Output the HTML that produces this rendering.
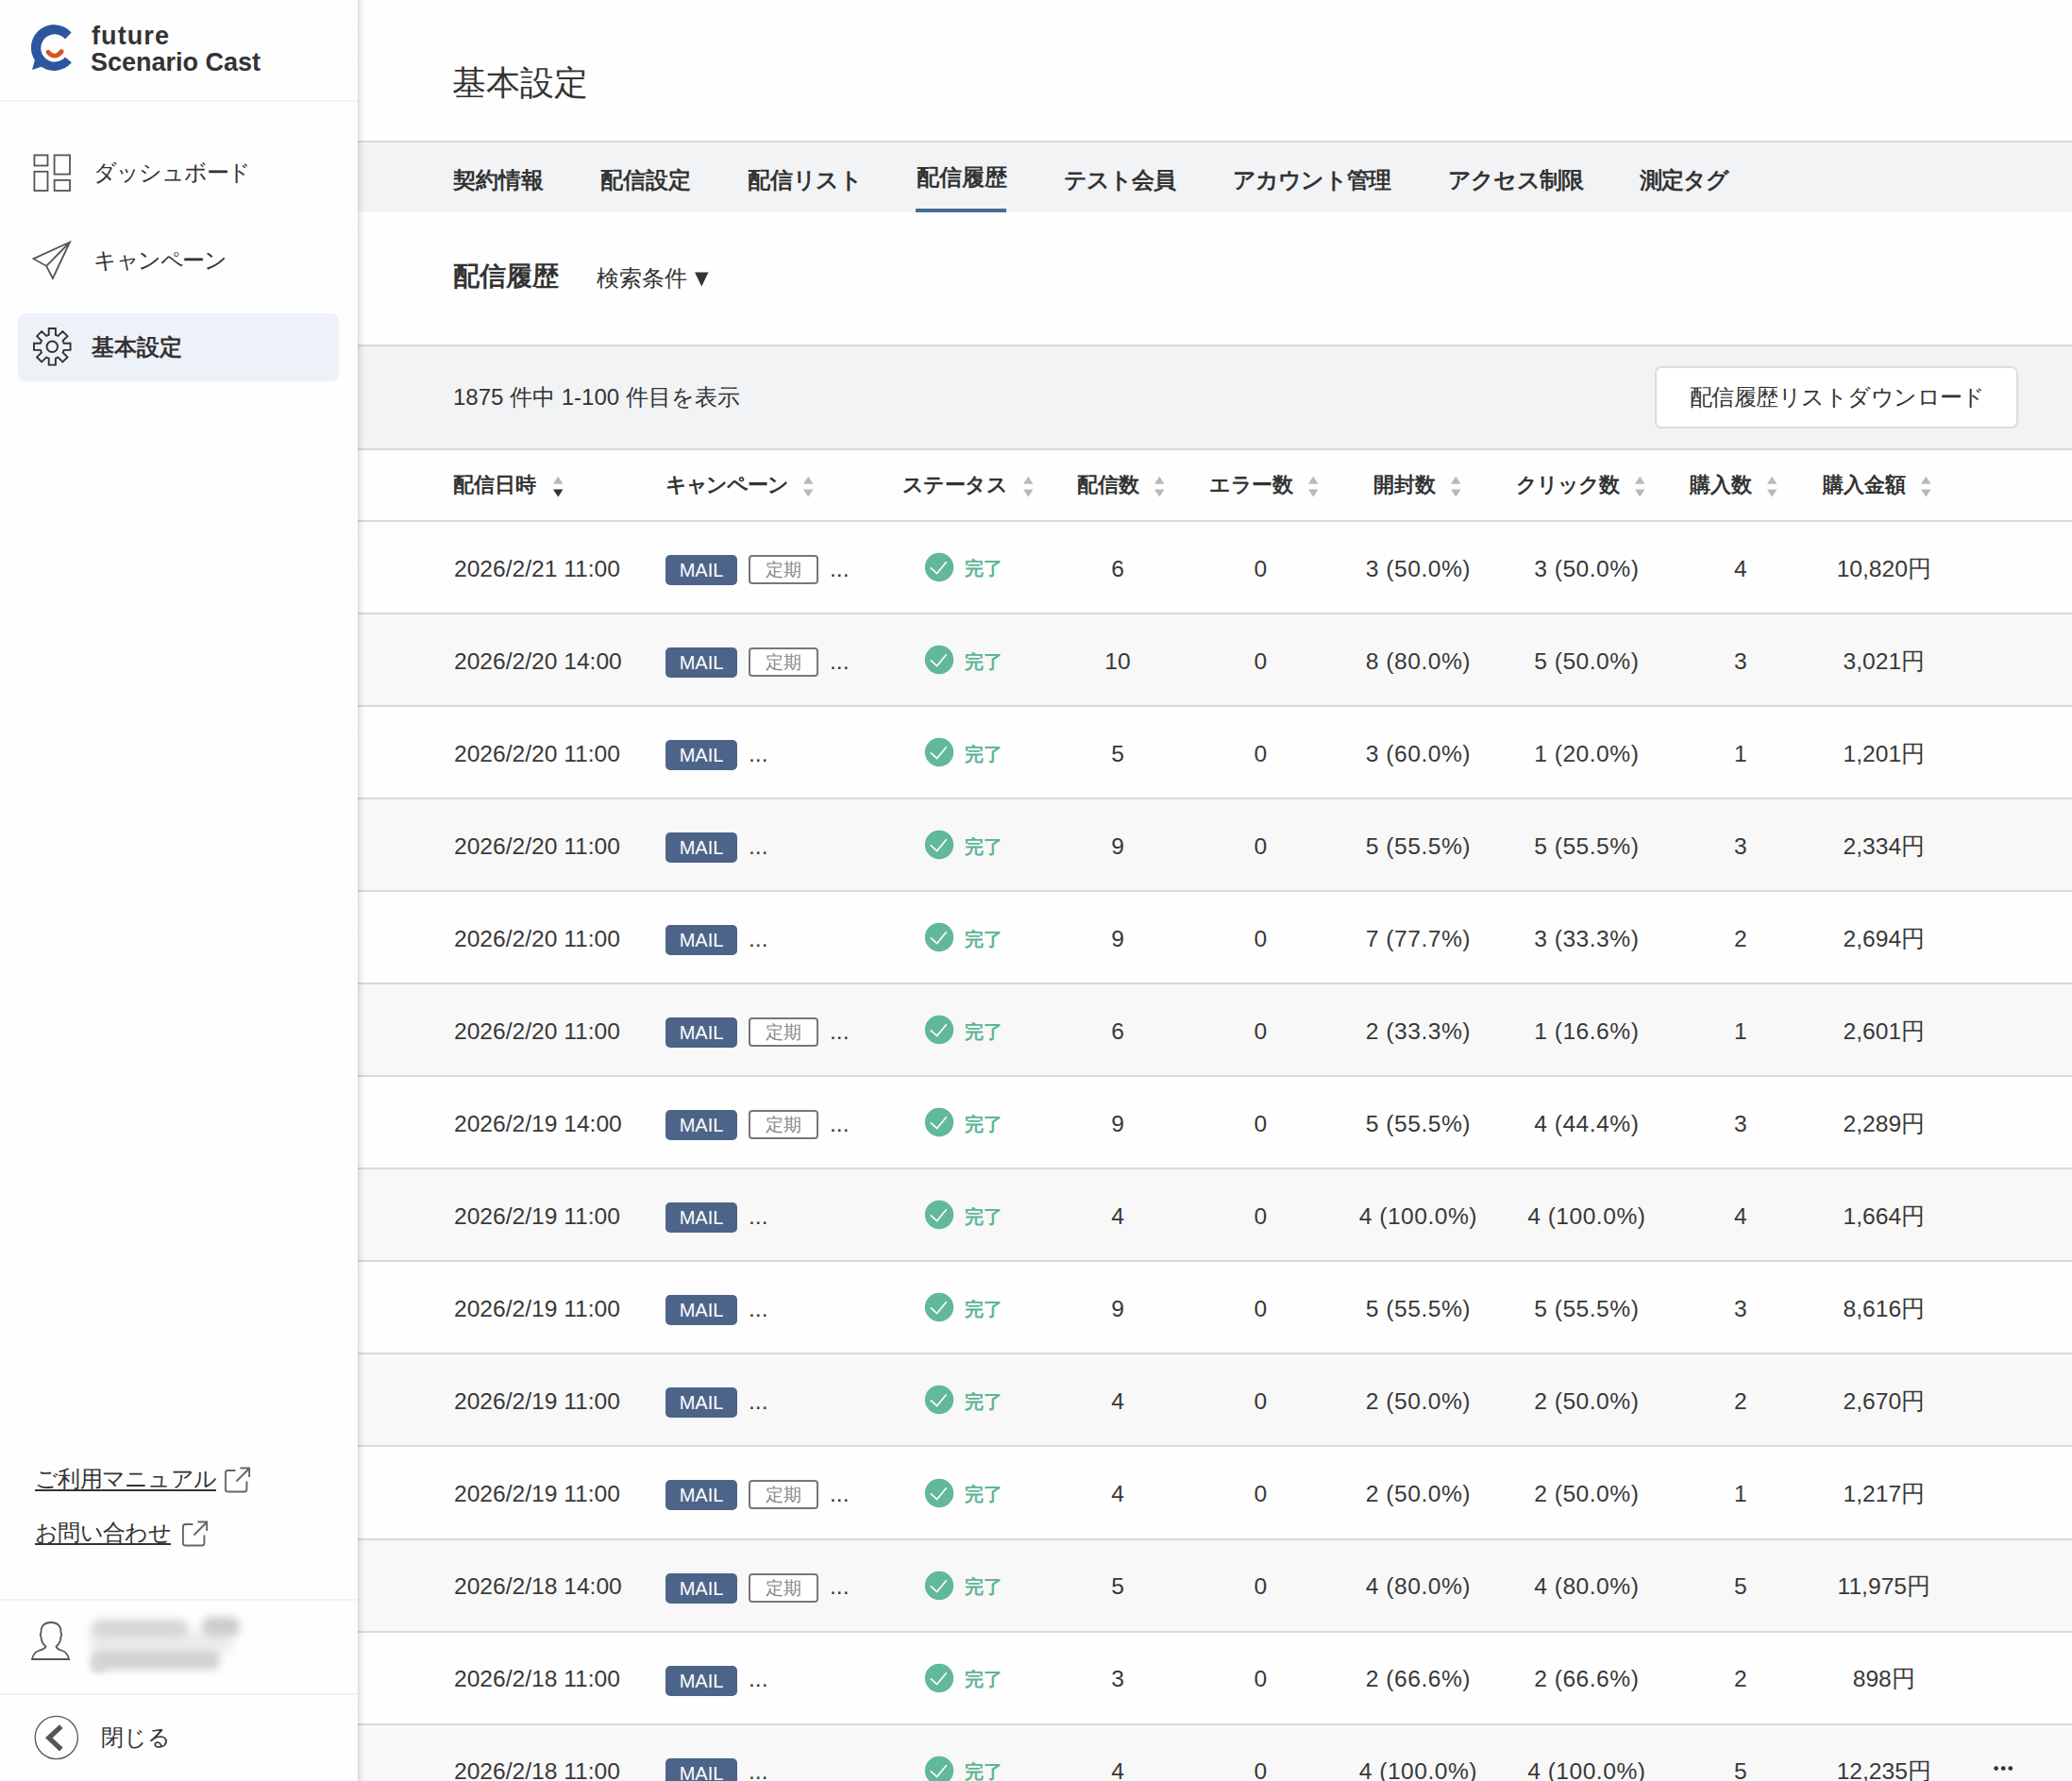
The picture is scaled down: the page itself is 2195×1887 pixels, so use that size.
<!DOCTYPE html>
<html><head><meta charset="utf-8"><style>
html,body{margin:0;padding:0;width:2195px;height:1887px;overflow:hidden;background:#fefefe;font-family:"Liberation Sans", sans-serif;}
.t{position:absolute;white-space:nowrap;line-height:1;}
.c{width:600px;text-align:center;}
.r{position:absolute;box-sizing:border-box;}
.badge{width:76px;height:32px;background:#4d6489;border-radius:5px;color:#fff;font-size:20px;line-height:32px;text-align:center;}
.badge2{width:74px;height:31px;border:2px solid #777;border-radius:4px;background:#fff;color:#888;font-size:19px;line-height:27px;text-align:center;}
</style></head><body>
<div class="r" style="left:379px;top:0px;width:1816px;height:1887px;background:#fefefe;"></div>
<div class="r" style="left:379px;top:149px;width:1816px;height:2px;background:#d9d9d9;"></div>
<div class="r" style="left:379px;top:151px;width:1816px;height:74px;background:#f2f3f5;"></div>
<div class="r" style="left:379px;top:365px;width:1816px;height:2px;background:#d9d9d9;"></div>
<div class="r" style="left:379px;top:367px;width:1816px;height:108px;background:#f2f3f5;"></div>
<div class="r" style="left:379px;top:475px;width:1816px;height:2px;background:#d9d9d9;"></div>
<div class="r" style="left:379px;top:551px;width:1816px;height:2px;background:#d9d9d9;"></div>
<div class="r" style="left:379px;top:649px;width:1816px;height:2px;background:#d9d9d9;"></div>
<div class="t" style="left:481px;top:590.58px;font-size:24.6px;font-weight:400;color:#383838;">2026/2/21 11:00</div>
<div class="r badge" style="left:705px;top:588px">MAIL</div>
<div class="r badge2" style="left:793px;top:588px">定期</div>
<div class="t" style="left:879px;top:590.58px;font-size:24.6px;font-weight:400;color:#383838;">...</div>
<svg class="r" style="left:979px;top:585px" width="32" height="32" viewBox="0 0 32 32"><circle cx="16" cy="16" r="15.2" fill="#62b89a"/><path d="M6.7 16.4 L13.6 22.6 L23.7 10.2" fill="none" stroke="#fff" stroke-width="1.6"/></svg>
<div class="t" style="left:1022px;top:590px;font-size:20px;font-weight:700;color:#5db594;line-height:24px;">完了</div>
<div class="t c" style="left:884px;top:590.58px;font-size:24.6px;font-weight:400;color:#383838;">6</div>
<div class="t c" style="left:1035.4px;top:590.58px;font-size:24.6px;font-weight:400;color:#383838;">0</div>
<div class="t c" style="left:1202.4px;top:590.58px;font-size:24.6px;font-weight:400;color:#383838;letter-spacing:0.5px;">3 (50.0%)</div>
<div class="t c" style="left:1380.8px;top:590.58px;font-size:24.6px;font-weight:400;color:#383838;letter-spacing:0.5px;">3 (50.0%)</div>
<div class="t c" style="left:1543.8px;top:590.58px;font-size:24.6px;font-weight:400;color:#383838;">4</div>
<div class="t c" style="left:1695.8px;top:590.58px;font-size:24.6px;font-weight:400;color:#383838;">10,820円</div>
<div class="r" style="left:379px;top:651px;width:1816px;height:96px;background:#f8f8f8;"></div>
<div class="r" style="left:379px;top:747px;width:1816px;height:2px;background:#d9d9d9;"></div>
<div class="t" style="left:481px;top:688.63px;font-size:24.6px;font-weight:400;color:#383838;">2026/2/20 14:00</div>
<div class="r badge" style="left:705px;top:686px">MAIL</div>
<div class="r badge2" style="left:793px;top:686px">定期</div>
<div class="t" style="left:879px;top:688.63px;font-size:24.6px;font-weight:400;color:#383838;">...</div>
<svg class="r" style="left:979px;top:683px" width="32" height="32" viewBox="0 0 32 32"><circle cx="16" cy="16" r="15.2" fill="#62b89a"/><path d="M6.7 16.4 L13.6 22.6 L23.7 10.2" fill="none" stroke="#fff" stroke-width="1.6"/></svg>
<div class="t" style="left:1022px;top:689px;font-size:20px;font-weight:700;color:#5db594;line-height:24px;">完了</div>
<div class="t c" style="left:884px;top:688.63px;font-size:24.6px;font-weight:400;color:#383838;">10</div>
<div class="t c" style="left:1035.4px;top:688.63px;font-size:24.6px;font-weight:400;color:#383838;">0</div>
<div class="t c" style="left:1202.4px;top:688.63px;font-size:24.6px;font-weight:400;color:#383838;letter-spacing:0.5px;">8 (80.0%)</div>
<div class="t c" style="left:1380.8px;top:688.63px;font-size:24.6px;font-weight:400;color:#383838;letter-spacing:0.5px;">5 (50.0%)</div>
<div class="t c" style="left:1543.8px;top:688.63px;font-size:24.6px;font-weight:400;color:#383838;">3</div>
<div class="t c" style="left:1695.8px;top:688.63px;font-size:24.6px;font-weight:400;color:#383838;">3,021円</div>
<div class="r" style="left:379px;top:845px;width:1816px;height:2px;background:#d9d9d9;"></div>
<div class="t" style="left:481px;top:786.68px;font-size:24.6px;font-weight:400;color:#383838;">2026/2/20 11:00</div>
<div class="r badge" style="left:705px;top:784px">MAIL</div>
<div class="t" style="left:793px;top:786.68px;font-size:24.6px;font-weight:400;color:#383838;">...</div>
<svg class="r" style="left:979px;top:781px" width="32" height="32" viewBox="0 0 32 32"><circle cx="16" cy="16" r="15.2" fill="#62b89a"/><path d="M6.7 16.4 L13.6 22.6 L23.7 10.2" fill="none" stroke="#fff" stroke-width="1.6"/></svg>
<div class="t" style="left:1022px;top:787px;font-size:20px;font-weight:700;color:#5db594;line-height:24px;">完了</div>
<div class="t c" style="left:884px;top:786.68px;font-size:24.6px;font-weight:400;color:#383838;">5</div>
<div class="t c" style="left:1035.4px;top:786.68px;font-size:24.6px;font-weight:400;color:#383838;">0</div>
<div class="t c" style="left:1202.4px;top:786.68px;font-size:24.6px;font-weight:400;color:#383838;letter-spacing:0.5px;">3 (60.0%)</div>
<div class="t c" style="left:1380.8px;top:786.68px;font-size:24.6px;font-weight:400;color:#383838;letter-spacing:0.5px;">1 (20.0%)</div>
<div class="t c" style="left:1543.8px;top:786.68px;font-size:24.6px;font-weight:400;color:#383838;">1</div>
<div class="t c" style="left:1695.8px;top:786.68px;font-size:24.6px;font-weight:400;color:#383838;">1,201円</div>
<div class="r" style="left:379px;top:847px;width:1816px;height:96px;background:#f8f8f8;"></div>
<div class="r" style="left:379px;top:943px;width:1816px;height:2px;background:#d9d9d9;"></div>
<div class="t" style="left:481px;top:884.73px;font-size:24.6px;font-weight:400;color:#383838;">2026/2/20 11:00</div>
<div class="r badge" style="left:705px;top:882px">MAIL</div>
<div class="t" style="left:793px;top:884.73px;font-size:24.6px;font-weight:400;color:#383838;">...</div>
<svg class="r" style="left:979px;top:879px" width="32" height="32" viewBox="0 0 32 32"><circle cx="16" cy="16" r="15.2" fill="#62b89a"/><path d="M6.7 16.4 L13.6 22.6 L23.7 10.2" fill="none" stroke="#fff" stroke-width="1.6"/></svg>
<div class="t" style="left:1022px;top:885px;font-size:20px;font-weight:700;color:#5db594;line-height:24px;">完了</div>
<div class="t c" style="left:884px;top:884.73px;font-size:24.6px;font-weight:400;color:#383838;">9</div>
<div class="t c" style="left:1035.4px;top:884.73px;font-size:24.6px;font-weight:400;color:#383838;">0</div>
<div class="t c" style="left:1202.4px;top:884.73px;font-size:24.6px;font-weight:400;color:#383838;letter-spacing:0.5px;">5 (55.5%)</div>
<div class="t c" style="left:1380.8px;top:884.73px;font-size:24.6px;font-weight:400;color:#383838;letter-spacing:0.5px;">5 (55.5%)</div>
<div class="t c" style="left:1543.8px;top:884.73px;font-size:24.6px;font-weight:400;color:#383838;">3</div>
<div class="t c" style="left:1695.8px;top:884.73px;font-size:24.6px;font-weight:400;color:#383838;">2,334円</div>
<div class="r" style="left:379px;top:1041px;width:1816px;height:2px;background:#d9d9d9;"></div>
<div class="t" style="left:481px;top:982.78px;font-size:24.6px;font-weight:400;color:#383838;">2026/2/20 11:00</div>
<div class="r badge" style="left:705px;top:980px">MAIL</div>
<div class="t" style="left:793px;top:982.78px;font-size:24.6px;font-weight:400;color:#383838;">...</div>
<svg class="r" style="left:979px;top:977px" width="32" height="32" viewBox="0 0 32 32"><circle cx="16" cy="16" r="15.2" fill="#62b89a"/><path d="M6.7 16.4 L13.6 22.6 L23.7 10.2" fill="none" stroke="#fff" stroke-width="1.6"/></svg>
<div class="t" style="left:1022px;top:983px;font-size:20px;font-weight:700;color:#5db594;line-height:24px;">完了</div>
<div class="t c" style="left:884px;top:982.78px;font-size:24.6px;font-weight:400;color:#383838;">9</div>
<div class="t c" style="left:1035.4px;top:982.78px;font-size:24.6px;font-weight:400;color:#383838;">0</div>
<div class="t c" style="left:1202.4px;top:982.78px;font-size:24.6px;font-weight:400;color:#383838;letter-spacing:0.5px;">7 (77.7%)</div>
<div class="t c" style="left:1380.8px;top:982.78px;font-size:24.6px;font-weight:400;color:#383838;letter-spacing:0.5px;">3 (33.3%)</div>
<div class="t c" style="left:1543.8px;top:982.78px;font-size:24.6px;font-weight:400;color:#383838;">2</div>
<div class="t c" style="left:1695.8px;top:982.78px;font-size:24.6px;font-weight:400;color:#383838;">2,694円</div>
<div class="r" style="left:379px;top:1043px;width:1816px;height:96px;background:#f8f8f8;"></div>
<div class="r" style="left:379px;top:1139px;width:1816px;height:2px;background:#d9d9d9;"></div>
<div class="t" style="left:481px;top:1080.83px;font-size:24.6px;font-weight:400;color:#383838;">2026/2/20 11:00</div>
<div class="r badge" style="left:705px;top:1078px">MAIL</div>
<div class="r badge2" style="left:793px;top:1078px">定期</div>
<div class="t" style="left:879px;top:1080.83px;font-size:24.6px;font-weight:400;color:#383838;">...</div>
<svg class="r" style="left:979px;top:1075px" width="32" height="32" viewBox="0 0 32 32"><circle cx="16" cy="16" r="15.2" fill="#62b89a"/><path d="M6.7 16.4 L13.6 22.6 L23.7 10.2" fill="none" stroke="#fff" stroke-width="1.6"/></svg>
<div class="t" style="left:1022px;top:1081px;font-size:20px;font-weight:700;color:#5db594;line-height:24px;">完了</div>
<div class="t c" style="left:884px;top:1080.83px;font-size:24.6px;font-weight:400;color:#383838;">6</div>
<div class="t c" style="left:1035.4px;top:1080.83px;font-size:24.6px;font-weight:400;color:#383838;">0</div>
<div class="t c" style="left:1202.4px;top:1080.83px;font-size:24.6px;font-weight:400;color:#383838;letter-spacing:0.5px;">2 (33.3%)</div>
<div class="t c" style="left:1380.8px;top:1080.83px;font-size:24.6px;font-weight:400;color:#383838;letter-spacing:0.5px;">1 (16.6%)</div>
<div class="t c" style="left:1543.8px;top:1080.83px;font-size:24.6px;font-weight:400;color:#383838;">1</div>
<div class="t c" style="left:1695.8px;top:1080.83px;font-size:24.6px;font-weight:400;color:#383838;">2,601円</div>
<div class="r" style="left:379px;top:1237px;width:1816px;height:2px;background:#d9d9d9;"></div>
<div class="t" style="left:481px;top:1178.88px;font-size:24.6px;font-weight:400;color:#383838;">2026/2/19 14:00</div>
<div class="r badge" style="left:705px;top:1176px">MAIL</div>
<div class="r badge2" style="left:793px;top:1176px">定期</div>
<div class="t" style="left:879px;top:1178.88px;font-size:24.6px;font-weight:400;color:#383838;">...</div>
<svg class="r" style="left:979px;top:1173px" width="32" height="32" viewBox="0 0 32 32"><circle cx="16" cy="16" r="15.2" fill="#62b89a"/><path d="M6.7 16.4 L13.6 22.6 L23.7 10.2" fill="none" stroke="#fff" stroke-width="1.6"/></svg>
<div class="t" style="left:1022px;top:1179px;font-size:20px;font-weight:700;color:#5db594;line-height:24px;">完了</div>
<div class="t c" style="left:884px;top:1178.88px;font-size:24.6px;font-weight:400;color:#383838;">9</div>
<div class="t c" style="left:1035.4px;top:1178.88px;font-size:24.6px;font-weight:400;color:#383838;">0</div>
<div class="t c" style="left:1202.4px;top:1178.88px;font-size:24.6px;font-weight:400;color:#383838;letter-spacing:0.5px;">5 (55.5%)</div>
<div class="t c" style="left:1380.8px;top:1178.88px;font-size:24.6px;font-weight:400;color:#383838;letter-spacing:0.5px;">4 (44.4%)</div>
<div class="t c" style="left:1543.8px;top:1178.88px;font-size:24.6px;font-weight:400;color:#383838;">3</div>
<div class="t c" style="left:1695.8px;top:1178.88px;font-size:24.6px;font-weight:400;color:#383838;">2,289円</div>
<div class="r" style="left:379px;top:1239px;width:1816px;height:96px;background:#f8f8f8;"></div>
<div class="r" style="left:379px;top:1335px;width:1816px;height:2px;background:#d9d9d9;"></div>
<div class="t" style="left:481px;top:1276.93px;font-size:24.6px;font-weight:400;color:#383838;">2026/2/19 11:00</div>
<div class="r badge" style="left:705px;top:1274px">MAIL</div>
<div class="t" style="left:793px;top:1276.93px;font-size:24.6px;font-weight:400;color:#383838;">...</div>
<svg class="r" style="left:979px;top:1271px" width="32" height="32" viewBox="0 0 32 32"><circle cx="16" cy="16" r="15.2" fill="#62b89a"/><path d="M6.7 16.4 L13.6 22.6 L23.7 10.2" fill="none" stroke="#fff" stroke-width="1.6"/></svg>
<div class="t" style="left:1022px;top:1277px;font-size:20px;font-weight:700;color:#5db594;line-height:24px;">完了</div>
<div class="t c" style="left:884px;top:1276.93px;font-size:24.6px;font-weight:400;color:#383838;">4</div>
<div class="t c" style="left:1035.4px;top:1276.93px;font-size:24.6px;font-weight:400;color:#383838;">0</div>
<div class="t c" style="left:1202.4px;top:1276.93px;font-size:24.6px;font-weight:400;color:#383838;letter-spacing:0.5px;">4 (100.0%)</div>
<div class="t c" style="left:1380.8px;top:1276.93px;font-size:24.6px;font-weight:400;color:#383838;letter-spacing:0.5px;">4 (100.0%)</div>
<div class="t c" style="left:1543.8px;top:1276.93px;font-size:24.6px;font-weight:400;color:#383838;">4</div>
<div class="t c" style="left:1695.8px;top:1276.93px;font-size:24.6px;font-weight:400;color:#383838;">1,664円</div>
<div class="r" style="left:379px;top:1433px;width:1816px;height:2px;background:#d9d9d9;"></div>
<div class="t" style="left:481px;top:1374.98px;font-size:24.6px;font-weight:400;color:#383838;">2026/2/19 11:00</div>
<div class="r badge" style="left:705px;top:1372px">MAIL</div>
<div class="t" style="left:793px;top:1374.98px;font-size:24.6px;font-weight:400;color:#383838;">...</div>
<svg class="r" style="left:979px;top:1369px" width="32" height="32" viewBox="0 0 32 32"><circle cx="16" cy="16" r="15.2" fill="#62b89a"/><path d="M6.7 16.4 L13.6 22.6 L23.7 10.2" fill="none" stroke="#fff" stroke-width="1.6"/></svg>
<div class="t" style="left:1022px;top:1375px;font-size:20px;font-weight:700;color:#5db594;line-height:24px;">完了</div>
<div class="t c" style="left:884px;top:1374.98px;font-size:24.6px;font-weight:400;color:#383838;">9</div>
<div class="t c" style="left:1035.4px;top:1374.98px;font-size:24.6px;font-weight:400;color:#383838;">0</div>
<div class="t c" style="left:1202.4px;top:1374.98px;font-size:24.6px;font-weight:400;color:#383838;letter-spacing:0.5px;">5 (55.5%)</div>
<div class="t c" style="left:1380.8px;top:1374.98px;font-size:24.6px;font-weight:400;color:#383838;letter-spacing:0.5px;">5 (55.5%)</div>
<div class="t c" style="left:1543.8px;top:1374.98px;font-size:24.6px;font-weight:400;color:#383838;">3</div>
<div class="t c" style="left:1695.8px;top:1374.98px;font-size:24.6px;font-weight:400;color:#383838;">8,616円</div>
<div class="r" style="left:379px;top:1435px;width:1816px;height:96px;background:#f8f8f8;"></div>
<div class="r" style="left:379px;top:1531px;width:1816px;height:2px;background:#d9d9d9;"></div>
<div class="t" style="left:481px;top:1473.03px;font-size:24.6px;font-weight:400;color:#383838;">2026/2/19 11:00</div>
<div class="r badge" style="left:705px;top:1470px">MAIL</div>
<div class="t" style="left:793px;top:1473.03px;font-size:24.6px;font-weight:400;color:#383838;">...</div>
<svg class="r" style="left:979px;top:1467px" width="32" height="32" viewBox="0 0 32 32"><circle cx="16" cy="16" r="15.2" fill="#62b89a"/><path d="M6.7 16.4 L13.6 22.6 L23.7 10.2" fill="none" stroke="#fff" stroke-width="1.6"/></svg>
<div class="t" style="left:1022px;top:1473px;font-size:20px;font-weight:700;color:#5db594;line-height:24px;">完了</div>
<div class="t c" style="left:884px;top:1473.03px;font-size:24.6px;font-weight:400;color:#383838;">4</div>
<div class="t c" style="left:1035.4px;top:1473.03px;font-size:24.6px;font-weight:400;color:#383838;">0</div>
<div class="t c" style="left:1202.4px;top:1473.03px;font-size:24.6px;font-weight:400;color:#383838;letter-spacing:0.5px;">2 (50.0%)</div>
<div class="t c" style="left:1380.8px;top:1473.03px;font-size:24.6px;font-weight:400;color:#383838;letter-spacing:0.5px;">2 (50.0%)</div>
<div class="t c" style="left:1543.8px;top:1473.03px;font-size:24.6px;font-weight:400;color:#383838;">2</div>
<div class="t c" style="left:1695.8px;top:1473.03px;font-size:24.6px;font-weight:400;color:#383838;">2,670円</div>
<div class="r" style="left:379px;top:1630px;width:1816px;height:2px;background:#d9d9d9;"></div>
<div class="t" style="left:481px;top:1571.08px;font-size:24.6px;font-weight:400;color:#383838;">2026/2/19 11:00</div>
<div class="r badge" style="left:705px;top:1568px">MAIL</div>
<div class="r badge2" style="left:793px;top:1568px">定期</div>
<div class="t" style="left:879px;top:1571.08px;font-size:24.6px;font-weight:400;color:#383838;">...</div>
<svg class="r" style="left:979px;top:1566px" width="32" height="32" viewBox="0 0 32 32"><circle cx="16" cy="16" r="15.2" fill="#62b89a"/><path d="M6.7 16.4 L13.6 22.6 L23.7 10.2" fill="none" stroke="#fff" stroke-width="1.6"/></svg>
<div class="t" style="left:1022px;top:1571px;font-size:20px;font-weight:700;color:#5db594;line-height:24px;">完了</div>
<div class="t c" style="left:884px;top:1571.08px;font-size:24.6px;font-weight:400;color:#383838;">4</div>
<div class="t c" style="left:1035.4px;top:1571.08px;font-size:24.6px;font-weight:400;color:#383838;">0</div>
<div class="t c" style="left:1202.4px;top:1571.08px;font-size:24.6px;font-weight:400;color:#383838;letter-spacing:0.5px;">2 (50.0%)</div>
<div class="t c" style="left:1380.8px;top:1571.08px;font-size:24.6px;font-weight:400;color:#383838;letter-spacing:0.5px;">2 (50.0%)</div>
<div class="t c" style="left:1543.8px;top:1571.08px;font-size:24.6px;font-weight:400;color:#383838;">1</div>
<div class="t c" style="left:1695.8px;top:1571.08px;font-size:24.6px;font-weight:400;color:#383838;">1,217円</div>
<div class="r" style="left:379px;top:1632px;width:1816px;height:96px;background:#f8f8f8;"></div>
<div class="r" style="left:379px;top:1728px;width:1816px;height:2px;background:#d9d9d9;"></div>
<div class="t" style="left:481px;top:1669.13px;font-size:24.6px;font-weight:400;color:#383838;">2026/2/18 14:00</div>
<div class="r badge" style="left:705px;top:1667px">MAIL</div>
<div class="r badge2" style="left:793px;top:1667px">定期</div>
<div class="t" style="left:879px;top:1669.13px;font-size:24.6px;font-weight:400;color:#383838;">...</div>
<svg class="r" style="left:979px;top:1664px" width="32" height="32" viewBox="0 0 32 32"><circle cx="16" cy="16" r="15.2" fill="#62b89a"/><path d="M6.7 16.4 L13.6 22.6 L23.7 10.2" fill="none" stroke="#fff" stroke-width="1.6"/></svg>
<div class="t" style="left:1022px;top:1669px;font-size:20px;font-weight:700;color:#5db594;line-height:24px;">完了</div>
<div class="t c" style="left:884px;top:1669.13px;font-size:24.6px;font-weight:400;color:#383838;">5</div>
<div class="t c" style="left:1035.4px;top:1669.13px;font-size:24.6px;font-weight:400;color:#383838;">0</div>
<div class="t c" style="left:1202.4px;top:1669.13px;font-size:24.6px;font-weight:400;color:#383838;letter-spacing:0.5px;">4 (80.0%)</div>
<div class="t c" style="left:1380.8px;top:1669.13px;font-size:24.6px;font-weight:400;color:#383838;letter-spacing:0.5px;">4 (80.0%)</div>
<div class="t c" style="left:1543.8px;top:1669.13px;font-size:24.6px;font-weight:400;color:#383838;">5</div>
<div class="t c" style="left:1695.8px;top:1669.13px;font-size:24.6px;font-weight:400;color:#383838;">11,975円</div>
<div class="r" style="left:379px;top:1826px;width:1816px;height:2px;background:#d9d9d9;"></div>
<div class="t" style="left:481px;top:1767.18px;font-size:24.6px;font-weight:400;color:#383838;">2026/2/18 11:00</div>
<div class="r badge" style="left:705px;top:1765px">MAIL</div>
<div class="t" style="left:793px;top:1767.18px;font-size:24.6px;font-weight:400;color:#383838;">...</div>
<svg class="r" style="left:979px;top:1762px" width="32" height="32" viewBox="0 0 32 32"><circle cx="16" cy="16" r="15.2" fill="#62b89a"/><path d="M6.7 16.4 L13.6 22.6 L23.7 10.2" fill="none" stroke="#fff" stroke-width="1.6"/></svg>
<div class="t" style="left:1022px;top:1767px;font-size:20px;font-weight:700;color:#5db594;line-height:24px;">完了</div>
<div class="t c" style="left:884px;top:1767.18px;font-size:24.6px;font-weight:400;color:#383838;">3</div>
<div class="t c" style="left:1035.4px;top:1767.18px;font-size:24.6px;font-weight:400;color:#383838;">0</div>
<div class="t c" style="left:1202.4px;top:1767.18px;font-size:24.6px;font-weight:400;color:#383838;letter-spacing:0.5px;">2 (66.6%)</div>
<div class="t c" style="left:1380.8px;top:1767.18px;font-size:24.6px;font-weight:400;color:#383838;letter-spacing:0.5px;">2 (66.6%)</div>
<div class="t c" style="left:1543.8px;top:1767.18px;font-size:24.6px;font-weight:400;color:#383838;">2</div>
<div class="t c" style="left:1695.8px;top:1767.18px;font-size:24.6px;font-weight:400;color:#383838;">898円</div>
<div class="r" style="left:379px;top:1828px;width:1816px;height:96px;background:#f8f8f8;"></div>
<div class="r" style="left:379px;top:1924px;width:1816px;height:2px;background:#d9d9d9;"></div>
<div class="t" style="left:481px;top:1865.23px;font-size:24.6px;font-weight:400;color:#383838;">2026/2/18 11:00</div>
<div class="r badge" style="left:705px;top:1863px">MAIL</div>
<div class="t" style="left:793px;top:1865.23px;font-size:24.6px;font-weight:400;color:#383838;">...</div>
<svg class="r" style="left:979px;top:1860px" width="32" height="32" viewBox="0 0 32 32"><circle cx="16" cy="16" r="15.2" fill="#62b89a"/><path d="M6.7 16.4 L13.6 22.6 L23.7 10.2" fill="none" stroke="#fff" stroke-width="1.6"/></svg>
<div class="t" style="left:1022px;top:1865px;font-size:20px;font-weight:700;color:#5db594;line-height:24px;">完了</div>
<div class="t c" style="left:884px;top:1865.23px;font-size:24.6px;font-weight:400;color:#383838;">4</div>
<div class="t c" style="left:1035.4px;top:1865.23px;font-size:24.6px;font-weight:400;color:#383838;">0</div>
<div class="t c" style="left:1202.4px;top:1865.23px;font-size:24.6px;font-weight:400;color:#383838;letter-spacing:0.5px;">4 (100.0%)</div>
<div class="t c" style="left:1380.8px;top:1865.23px;font-size:24.6px;font-weight:400;color:#383838;letter-spacing:0.5px;">4 (100.0%)</div>
<div class="t c" style="left:1543.8px;top:1865.23px;font-size:24.6px;font-weight:400;color:#383838;">5</div>
<div class="t c" style="left:1695.8px;top:1865.23px;font-size:24.6px;font-weight:400;color:#383838;">12,235円</div>
<svg class="r" style="left:2100px;top:1860px" width="40" height="27" viewBox="0 0 40 27"><g fill="#333"><circle cx="14.6" cy="13.6" r="2.4"/><circle cx="22.2" cy="13.6" r="2.4"/><circle cx="29.8" cy="13.6" r="2.4"/></g></svg>
<div class="t" style="left:479px;top:68px;font-size:36px;font-weight:400;color:#333;line-height:40px;">基本設定</div>
<div class="t" style="left:480px;top:176px;font-size:24px;font-weight:700;color:#333;line-height:30px;letter-spacing:0px;">契約情報</div>
<div class="t" style="left:636px;top:176px;font-size:24px;font-weight:700;color:#333;line-height:30px;letter-spacing:0px;">配信設定</div>
<div class="t" style="left:792px;top:176px;font-size:24px;font-weight:700;color:#333;line-height:30px;letter-spacing:-0.2px;">配信リスト</div>
<div class="t" style="left:971px;top:173px;font-size:24px;font-weight:700;color:#333;line-height:30px;letter-spacing:0px;">配信履歴</div>
<div class="t" style="left:1127px;top:176px;font-size:24px;font-weight:700;color:#333;line-height:30px;letter-spacing:-1.1px;">テスト会員</div>
<div class="t" style="left:1306px;top:176px;font-size:24px;font-weight:700;color:#333;line-height:30px;letter-spacing:-0.85px;">アカウント管理</div>
<div class="t" style="left:1534px;top:176px;font-size:24px;font-weight:700;color:#333;line-height:30px;letter-spacing:-0.83px;">アクセス制限</div>
<div class="t" style="left:1737px;top:176px;font-size:24px;font-weight:700;color:#333;line-height:30px;letter-spacing:-1px;">測定タグ</div>
<div class="r" style="left:970px;top:221px;width:96px;height:4px;background:#4a6a97;"></div>
<div class="t" style="left:480px;top:277px;font-size:28px;font-weight:700;color:#333;line-height:32px;">配信履歴</div>
<div class="t" style="left:632px;top:280px;font-size:24px;font-weight:400;color:#333;line-height:30px;">検索条件</div>
<svg class="r" style="left:736px;top:288px" width="15" height="16" viewBox="0 0 15 16"><path d="M0 0.5 H14.5 L7.25 15.5 Z" fill="#333"/></svg>
<div class="t" style="left:480px;top:406px;font-size:24px;font-weight:400;color:#333;line-height:30px;">1875 件中 1-100 件目を表示</div>
<div class="r" style="left:1753px;top:388px;width:385px;height:66px;border:2px solid #dcdcdc;border-radius:7px;background:#fff"></div>
<div class="t" style="left:1790px;top:406px;font-size:24px;font-weight:400;color:#333;line-height:30px;letter-spacing:-0.55px;">配信履歴リストダウンロード</div>
<div class="t" style="left:480px;top:500px;font-size:22px;font-weight:700;color:#333;line-height:28px;letter-spacing:0px;">配信日時</div>
<svg class="r" style="left:586px;top:504px" width="11" height="24" viewBox="0 0 11 24"><path d="M0 8.7 L5.25 0.7 L10.5 8.7 Z" fill="#b9b9b9"/><path d="M0 14.5 L10.5 14.5 L5.25 22.5 Z" fill="#333"/></svg>
<div class="t" style="left:705px;top:500px;font-size:22px;font-weight:700;color:#333;line-height:28px;letter-spacing:-1.3px;">キャンペーン</div>
<svg class="r" style="left:851px;top:504px" width="11" height="24" viewBox="0 0 11 24"><path d="M0 8.7 L5.25 0.7 L10.5 8.7 Z" fill="#b9b9b9"/><path d="M0 14.5 L10.5 14.5 L5.25 22.5 Z" fill="#b9b9b9"/></svg>
<div class="t" style="left:956px;top:500px;font-size:22px;font-weight:700;color:#333;line-height:28px;letter-spacing:-0.6px;">ステータス</div>
<svg class="r" style="left:1084px;top:504px" width="11" height="24" viewBox="0 0 11 24"><path d="M0 8.7 L5.25 0.7 L10.5 8.7 Z" fill="#b9b9b9"/><path d="M0 14.5 L10.5 14.5 L5.25 22.5 Z" fill="#b9b9b9"/></svg>
<div class="t" style="left:1141px;top:500px;font-size:22px;font-weight:700;color:#333;line-height:28px;letter-spacing:0px;">配信数</div>
<svg class="r" style="left:1223px;top:504px" width="11" height="24" viewBox="0 0 11 24"><path d="M0 8.7 L5.25 0.7 L10.5 8.7 Z" fill="#b9b9b9"/><path d="M0 14.5 L10.5 14.5 L5.25 22.5 Z" fill="#b9b9b9"/></svg>
<div class="t" style="left:1281px;top:500px;font-size:22px;font-weight:700;color:#333;line-height:28px;letter-spacing:-0.3px;">エラー数</div>
<svg class="r" style="left:1386px;top:504px" width="11" height="24" viewBox="0 0 11 24"><path d="M0 8.7 L5.25 0.7 L10.5 8.7 Z" fill="#b9b9b9"/><path d="M0 14.5 L10.5 14.5 L5.25 22.5 Z" fill="#b9b9b9"/></svg>
<div class="t" style="left:1455px;top:500px;font-size:22px;font-weight:700;color:#333;line-height:28px;letter-spacing:0px;">開封数</div>
<svg class="r" style="left:1537px;top:504px" width="11" height="24" viewBox="0 0 11 24"><path d="M0 8.7 L5.25 0.7 L10.5 8.7 Z" fill="#b9b9b9"/><path d="M0 14.5 L10.5 14.5 L5.25 22.5 Z" fill="#b9b9b9"/></svg>
<div class="t" style="left:1606px;top:500px;font-size:22px;font-weight:700;color:#333;line-height:28px;letter-spacing:-1px;">クリック数</div>
<svg class="r" style="left:1732px;top:504px" width="11" height="24" viewBox="0 0 11 24"><path d="M0 8.7 L5.25 0.7 L10.5 8.7 Z" fill="#b9b9b9"/><path d="M0 14.5 L10.5 14.5 L5.25 22.5 Z" fill="#b9b9b9"/></svg>
<div class="t" style="left:1790px;top:500px;font-size:22px;font-weight:700;color:#333;line-height:28px;letter-spacing:0px;">購入数</div>
<svg class="r" style="left:1872px;top:504px" width="11" height="24" viewBox="0 0 11 24"><path d="M0 8.7 L5.25 0.7 L10.5 8.7 Z" fill="#b9b9b9"/><path d="M0 14.5 L10.5 14.5 L5.25 22.5 Z" fill="#b9b9b9"/></svg>
<div class="t" style="left:1931px;top:500px;font-size:22px;font-weight:700;color:#333;line-height:28px;letter-spacing:0px;">購入金額</div>
<svg class="r" style="left:2035px;top:504px" width="11" height="24" viewBox="0 0 11 24"><path d="M0 8.7 L5.25 0.7 L10.5 8.7 Z" fill="#b9b9b9"/><path d="M0 14.5 L10.5 14.5 L5.25 22.5 Z" fill="#b9b9b9"/></svg>
<div class="r" style="left:0px;top:0px;width:379px;height:1887px;background:#fefefe;"></div>
<div class="r" style="left:0px;top:106px;width:379px;height:2px;background:#f3f3f3;"></div>
<div class="r" style="left:0px;top:1694px;width:379px;height:2px;background:#f3f3f3;"></div>
<div class="r" style="left:0px;top:1794px;width:379px;height:2px;background:#f3f3f3;"></div>
<div class="r" style="left:379px;top:0;width:8px;height:1887px;background:linear-gradient(to right, rgba(0,0,0,0.13), rgba(0,0,0,0.05) 40%, rgba(0,0,0,0))"></div>
<svg class="r" style="left:0;top:0" width="100" height="100" viewBox="0 0 100 100">
<path d="M75.6 34.4 A24.4 24.4 0 1 0 75.9 66.3 L69 60.4 A14.6 14.6 0 1 1 69 41.5 Z" fill="#2d56a0"/>
<path d="M36.8 63.8 L34 74 L44.6 70.6 L48 62 Z" fill="#2d56a0"/>
<path d="M51 55.2 Q57.8 63.4 65.2 54.6" fill="none" stroke="#d5561f" stroke-width="4.8" stroke-linecap="round"/>
</svg>
<div class="t" style="left:97px;top:24px;font-size:27px;font-weight:700;color:#333;line-height:28px;letter-spacing:1.1px;">future</div>
<div class="t" style="left:96px;top:52px;font-size:27px;font-weight:700;color:#333;line-height:28px;">Scenario Cast</div>
<div class="r" style="left:19px;top:332px;width:340px;height:72px;background:#edf1f8;border-radius:8px;"></div>
<svg class="r" style="left:0;top:140px" width="100" height="280" viewBox="0 140 100 280">
<g fill="none" stroke="#555" stroke-width="1.8">
<rect x="36.4" y="164.4" width="14.1" height="11.1"/>
<rect x="36.4" y="181.8" width="14.1" height="20.2"/>
<rect x="57.6" y="164.4" width="16.4" height="20.2"/>
<rect x="57.6" y="190.9" width="16.4" height="11.1"/>
<path d="M74 256.5 L35.5 274.2 L49.1 281.8 L55.9 295 Z M74 256.5 L49.1 281.8" stroke-linejoin="miter"/>
</g>
<path d="M51.70 354.91 L51.70 348.00 L58.90 348.00 L58.90 354.91 L61.51 356.00 L66.40 351.11 L71.49 356.20 L66.60 361.09 L67.69 363.70 L74.60 363.70 L74.60 370.90 L67.69 370.90 L66.60 373.51 L71.49 378.40 L66.40 383.49 L61.51 378.60 L58.90 379.69 L58.90 386.60 L51.70 386.60 L51.70 379.69 L49.09 378.60 L44.20 383.49 L39.11 378.40 L44.00 373.51 L42.91 370.90 L36.00 370.90 L36.00 363.70 L42.91 363.70 L44.00 361.09 L39.11 356.20 L44.20 351.11 L49.09 356.00 Z" fill="none" stroke="#333" stroke-width="1.9" stroke-linejoin="miter"/><circle cx="55.3" cy="367.3" r="5.75" fill="none" stroke="#333" stroke-width="1.9"/>
</svg>
<div class="t" style="left:99px;top:168px;font-size:24px;font-weight:400;color:#333;line-height:30px;letter-spacing:-1.1px;">ダッシュボード</div>
<div class="t" style="left:99px;top:261px;font-size:24px;font-weight:400;color:#333;line-height:30px;letter-spacing:-1.5px;">キャンペーン</div>
<div class="t" style="left:97px;top:353px;font-size:24px;font-weight:700;color:#333;line-height:30px;">基本設定</div>
<div class="t" style="left:37px;top:1552px;font-size:24px;line-height:30px;color:#333;letter-spacing:-0.75px;text-decoration:underline;text-underline-offset:3px;text-decoration-thickness:2px">ご利用マニュアル</div>
<div class="t" style="left:37px;top:1609px;font-size:24px;line-height:30px;color:#333;letter-spacing:-0.67px;text-decoration:underline;text-underline-offset:3px;text-decoration-thickness:2px">お問い合わせ</div>
<svg class="r" style="left:237.6px;top:1554px" width="28" height="28" viewBox="0 0 28 28"><path d="M11.4 4 L3.4 4 Q0.9 4 0.9 6.5 L0.9 24 Q0.9 26.5 3.4 26.5 L20.9 26.5 Q23.4 26.5 23.4 24 L23.4 15.5 M12.4 15.5 L25.9 2 M16.4 1.5 L26.1 1.5 L26.1 11" fill="none" stroke="#666" stroke-width="1.9"/></svg>
<svg class="r" style="left:192.7px;top:1611px" width="28" height="28" viewBox="0 0 28 28"><path d="M11.4 4 L3.4 4 Q0.9 4 0.9 6.5 L0.9 24 Q0.9 26.5 3.4 26.5 L20.9 26.5 Q23.4 26.5 23.4 24 L23.4 15.5 M12.4 15.5 L25.9 2 M16.4 1.5 L26.1 1.5 L26.1 11" fill="none" stroke="#666" stroke-width="1.9"/></svg>
<svg class="r" style="left:0;top:1700px" width="100" height="70" viewBox="0 1700 100 70">
<path d="M48.5 1744.5 C45.5 1742 43.5 1738 43.5 1734 C42.5 1733 42.5 1731 43.5 1730 C43 1723 47 1719 54 1719 C61 1719 65 1723 64.5 1730 C65.5 1731 65.5 1733 64.5 1734 C64.5 1738 62.5 1742 59.5 1744.5 C60 1747 63 1748 66 1749 C70 1750 72 1753 73 1758 L34 1758 C35 1753 37 1750 41 1749 C44 1748 48 1747 48.5 1744.5 Z" fill="none" stroke="#555" stroke-width="1.8"/>
</svg>
<div class="r" style="left:96px;top:1728px;width:150px;height:22px;background:#ededed;filter:blur(5px)"></div>
<div class="r" style="left:97px;top:1716px;width:102px;height:19px;background:#d6d6d6;border-radius:8px;filter:blur(4.5px)"></div>
<div class="r" style="left:214px;top:1713px;width:40px;height:21px;background:#cdcdcd;border-radius:9px;filter:blur(4.5px)"></div>
<div class="r" style="left:97px;top:1748px;width:136px;height:21px;background:#d1d1d1;border-radius:8px;filter:blur(4.5px)"></div>
<div class="r" style="left:97px;top:1756px;width:14px;height:16px;background:#d6d6d6;border-radius:5px;filter:blur(3px)"></div>
<svg class="r" style="left:0;top:1800px" width="100" height="80" viewBox="0 1800 100 80">
<circle cx="59.8" cy="1841" r="22.6" fill="none" stroke="#555" stroke-width="1.3"/>
<path d="M64.8 1829.2 L51.8 1841.3 L64.8 1853.5" fill="none" stroke="#555" stroke-width="5.2"/>
</svg>
<div class="t" style="left:107px;top:1826px;font-size:24px;font-weight:400;color:#333;line-height:30px;">閉じる</div>
</body></html>
